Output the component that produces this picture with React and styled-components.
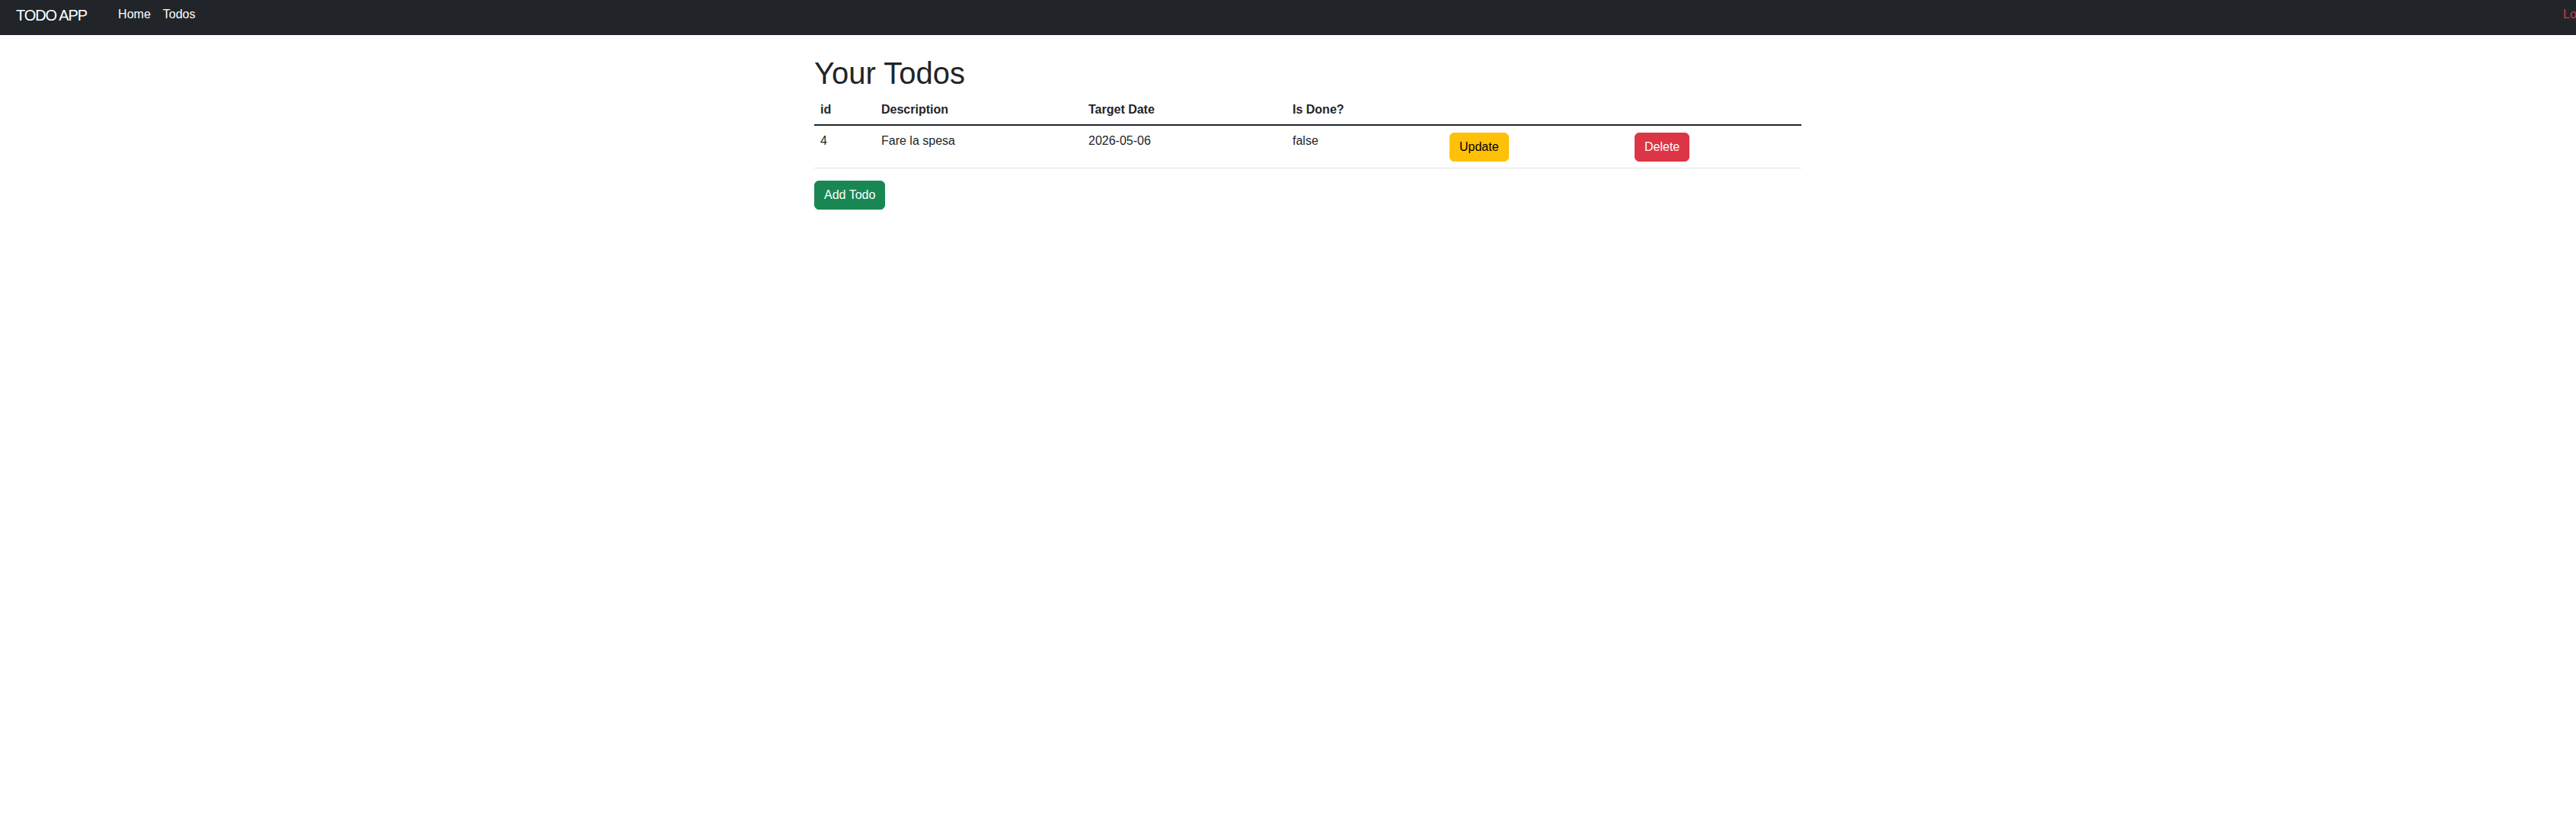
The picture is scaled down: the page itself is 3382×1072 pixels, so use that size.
import React from "react";
import styled, { createGlobalStyle } from "styled-components";

const GlobalStyle = createGlobalStyle`
  html, body {
    margin: 0;
    padding: 0;
    overflow-x: hidden;
    background: #ffffff;
  }
  body {
    font-family: "Segoe UI", "Liberation Sans", Arial, sans-serif;
    font-size: 16px;
    line-height: 1.5;
    color: #212529;
  }
  *, *::before, *::after { box-sizing: border-box; }
`;

const Page = styled.div`
  width: 3434px;
`;

const Navbar = styled.nav`
  background: #212529;
  height: 46px;
  padding: 5px 0 0;
`;

const NavInner = styled.div`
  display: flex;
  align-items: flex-start;
  padding: 0 12px;
`;

const Brand = styled.a`
  font-size: 20px;
  line-height: 30px;
  color: #ffffff;
  text-decoration: none;
  letter-spacing: -1.1px;
  margin-left: 9px;
  margin-right: 33px;
  white-space: nowrap;
`;

const NavList = styled.ul`
  display: flex;
  list-style: none;
  margin: 0;
  padding: 0;
  margin-left: ${(p) => (p.$end ? "auto" : "0")};
`;

const NavLink = styled.a`
  display: block;
  padding: 2px 8px;
  line-height: 24px;
  color: ${(p) => (p.$danger ? "#dc3545" : "#ffffff")};
  text-decoration: none;
  white-space: nowrap;
`;

const Container = styled.main`
  width: 1320px;
  margin: 0 auto;
  padding: 12px 12px 0;
`;

const Title = styled.h1`
  font-size: 40px;
  font-weight: 500;
  line-height: 48px;
  margin: 14px 0 3px;
`;

const Table = styled.table`
  width: 100%;
  border-collapse: collapse;
  table-layout: fixed;
  margin-bottom: 16px;
`;

const Th = styled.th`
  text-align: left;
  font-weight: 700;
  padding: 9px 8px 7px;
  line-height: 24px;
  border-bottom: 2px solid #212529;
  vertical-align: bottom;
`;

const Td = styled.td`
  padding: 8px;
  line-height: 24px;
  border-bottom: 1px solid #dee2e6;
  vertical-align: top;
`;

const variants = {
  success: { bg: "#198754", fg: "#ffffff" },
  warning: { bg: "#ffc107", fg: "#000000" },
  danger: { bg: "#dc3545", fg: "#ffffff" },
};

const Button = styled.button`
  display: inline-block;
  font-family: inherit;
  font-size: 16px;
  line-height: 24px;
  padding: 6px 12px;
  border: 1px solid ${(p) => variants[p.$variant].bg};
  border-radius: 6px;
  background: ${(p) => variants[p.$variant].bg};
  color: ${(p) => variants[p.$variant].fg};
  cursor: pointer;
  margin-top: ${(p) => (p.$inCell ? "1px" : "0")};
`;

const columns = [
  { label: "id", width: 80 },
  { label: "Description", width: 272 },
  { label: "Target Date", width: 268 },
  { label: "Is Done?", width: 206 },
  { label: "", width: 243 },
  { label: "", width: 227 },
];

const todos = [
  { id: 4, description: "Fare la spesa", targetDate: "2026-05-06", done: false },
];

export default function App() {
  return (
    <Page>
      <GlobalStyle />
      <Navbar>
        <NavInner>
          <Brand href="#">TODO APP</Brand>
          <NavList>
            <li><NavLink href="#">Home</NavLink></li>
            <li><NavLink href="#">Todos</NavLink></li>
          </NavList>
          <NavList $end>
            <li><NavLink href="#" $danger>Logout</NavLink></li>
          </NavList>
        </NavInner>
      </Navbar>
      <Container>
        <Title>Your Todos</Title>
        <Table>
          <colgroup>
            {columns.map((c, i) => (
              <col key={i} style={{ width: c.width }} />
            ))}
          </colgroup>
          <thead>
            <tr>
              {columns.map((c, i) => (
                <Th key={i}>{c.label}</Th>
              ))}
            </tr>
          </thead>
          <tbody>
            {todos.map((t) => (
              <tr key={t.id}>
                <Td>{t.id}</Td>
                <Td>{t.description}</Td>
                <Td>{t.targetDate}</Td>
                <Td>{String(t.done)}</Td>
                <Td><Button $variant="warning" $inCell>Update</Button></Td>
                <Td><Button $variant="danger" $inCell>Delete</Button></Td>
              </tr>
            ))}
          </tbody>
        </Table>
        <Button $variant="success">Add Todo</Button>
      </Container>
    </Page>
  );
}
